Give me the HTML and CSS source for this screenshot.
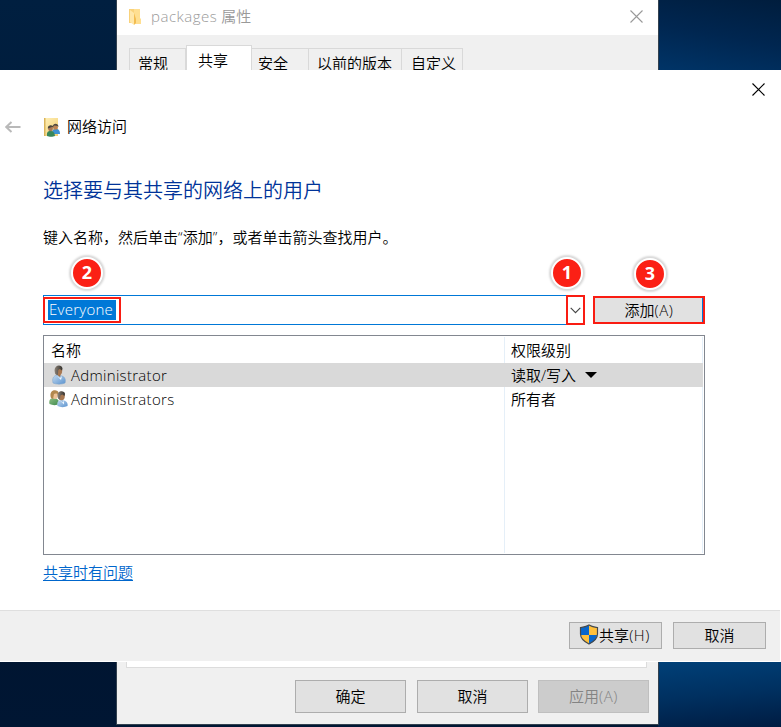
FILE: index.html
```
<!DOCTYPE html>
<html lang="zh-CN">
<head>
<meta charset="utf-8">
<title>网络访问</title>
<link rel="stylesheet" href="styles.css">
</head>
<body>
<svg class="defs" aria-hidden="true">
  <defs>
    <linearGradient id="shirt" x1="0" y1="0" x2="1" y2="1"><stop offset="0" stop-color="#c3daf0"/><stop offset="1" stop-color="#5b93cf"/></linearGradient>
    <linearGradient id="green" x1="0" y1="0" x2="1" y2="1"><stop offset="0" stop-color="#8fbd85"/><stop offset="1" stop-color="#3d8a4c"/></linearGradient>
    <linearGradient id="hair" x1="0" y1="0" x2="1" y2="0"><stop offset="0" stop-color="#8b8278"/><stop offset="1" stop-color="#34302b"/></linearGradient>
    <linearGradient id="folder" x1="0" y1="0" x2="1" y2="1"><stop offset="0" stop-color="#fff0b8"/><stop offset="1" stop-color="#f2ce70"/></linearGradient>
  </defs>
</svg>
<div class="desktop">
  <section class="window properties">
    <header class="titlebar">
      <svg class="folder" viewBox="0 0 12 17"><path d="M0 1h6v14H0z" fill="#f9d27b"/><path d="M5 1h6v9l1 1v5H5z" fill="#ffdf91"/><path d="M1 2l4 3v12l-4-3z" fill="#ffe7a9"/><path d="M5 5l2 6v4l-2 2z" fill="#f2bc51"/></svg>
      <span class="caption"><span class="latin">packages</span> 属性</span>
      <svg class="close" viewBox="0 0 13 13"><path d="M.5.5l12 12M12.5.5l-12 12"/></svg>
    </header>
    <nav class="tabs">
      <span class="tab t1">常规</span><span class="tab active">共享</span><span class="tab t3">安全</span><span class="tab t4">以前的版本</span><span class="tab t5">自定义</span>
    </nav>
    <div class="page"></div>
    <footer class="prop-actions">
      <button class="ok">确定</button><button>取消</button><button disabled>应用<span class="key">(A)</span></button>
    </footer>
  </section>

  <section class="window wizard">
    <div class="topbar"><svg class="close" viewBox="0 0 13 13"><path d="M.5.5l12 12M12.5.5l-12 12"/></svg></div>
    <header class="wizard-title">
      <svg class="back" viewBox="0 0 16 12"><path d="M15.5 6H1M6.5 1L1.2 6l5.300 5"/></svg>
      <svg class="share-icon" viewBox="0 0 17 19"><path d="M0 0h14v18H0z" fill="url(#folder)"/><path d="M0 0h1.500v18H0z" fill="#dab45a"/><path d="M8 16c0-4 1-5 4-5 3 0 4 2 4 5z" fill="#3f91d3"/><ellipse cx="11.500" cy="9" rx="2.300" ry="2.800" fill="#bd8354"/><path d="M8.800 9c0-4.500 5.700-4 5.700 0l-1-1-3-.5z" fill="#504b41"/><path d="M3 18c-.5-4 1-5 3.500-5s4 1 4.500 5c-2 1-6 1-8 0z" fill="#39875a"/><ellipse cx="6.500" cy="10.500" rx="2.300" ry="2.800" fill="#a77755"/><path d="M3.800 10.500C3.500 6.500 9.500 6.500 9.500 9.500l-2-.5-2 1z" fill="#4b463d"/></svg>
      <span class="title-text">网络访问</span>
    </header>
    <main class="content">
      <h1>选择要与其共享的网络上的用户</h1>
      <p>键入名称，然后单击<span class="quote">“</span>添加<span class="quote">”</span>，或者单击箭头查找用户。</p>
      <div class="entry">
        <div class="combo">
          <div class="name-box"><span class="selected">Everyone</span></div>
          <div class="arrow-box"><svg viewBox="0 0 11 7"><path d="M.7.8l4.800 4.800L10.300.8"/></svg></div>
        </div>
        <button class="add">添加<span class="key">(A)</span></button>
        <span class="badge b2">2</span><span class="badge b1">1</span><span class="badge b3">3</span>
      </div>
      <div class="list">
        <div class="row head"><span class="name">名称</span><span class="level">权限级别</span></div>
        <div class="row chosen">
          <span class="name user"><svg viewBox="0 0 20 20"><path d="M4 18c-1-4 0-7 4-8l5 1c3 1 4 4 3 7-3 1.500-9 1.500-12 0z" fill="url(#shirt)" stroke="#78a0c9" stroke-width=".5"/><path d="M7 9l4 3 1-4z" fill="#a66f3f"/><ellipse cx="10" cy="5.500" rx="3.200" ry="4.500" fill="#a87852"/><path d="M5.800 7C4-.5 13-1.500 13.500 3.500l-.5 2-2.200-1.500-1.500 1-.5 5c-2 0-3-1-3-3z" fill="url(#hair)"/><path d="M8 11l3 2 2-2-1 4z" fill="#eef7ff"/></svg>Administrator</span>
          <span class="level">读取/写入<i class="triangle"></i></span>
        </div>
        <div class="row">
          <span class="name user"><svg viewBox="0 0 20 20"><path d="M.5 15c-1-4 1-6 4-6s6 2 6 6c-3 1.500-7 1.500-10 0z" fill="url(#green)"/><ellipse cx="6" cy="6" rx="3" ry="4" fill="#edc398"/><path d="M2 9C0 3 4 .5 7 1.500c3 0 3 4 2 5C9 4 6 4 5 5l-1 5z" fill="#b2884e"/><path d="M8.500 17c-1-4 1-6 4-6s7 2 6 6c-3 1.500-7 1.500-10 0z" fill="url(#shirt)"/><ellipse cx="12.500" cy="7" rx="3.300" ry="4.300" fill="#a87852"/><path d="M8.700 8C7 1 16 1 16 5l-.6 2-2-1.500-2 1-.5 4c-1.400 0-2-1-2.200-2.500z" fill="url(#hair)"/><path d="M11 11.500l3 2 1-2v4z" fill="#eef7ff"/></svg>Administrators</span>
          <span class="level">所有者</span>
        </div>
        <div class="row blank"><span class="name"></span><span class="level"></span></div>
      </div>
      <a class="help">共享时有问题</a>
    </main>
    <footer class="wizard-actions">
      <button class="share"><svg class="shield" viewBox="0 0 20 21"><path d="M10 1c3 2 5 2 8 2.500V10c0 5-4 8-8 10-4-2-8-5-8-10V3.500C5 3 7 3 10 1z" fill="#ffc03b"/><path d="M10 1v10H2V3.500C5 3 7 3 10 1zM10 11h8c-.5 5-4 7.500-8 9z" fill="#0866cb"/><path d="M10 1c3 2 5 2 8.500 2.500V10c0 5-4.500 8-8.500 10-4-2-8.500-5-8.500-10V3.500C5 3 7 3 10 1z" fill="none" stroke="#45494c" stroke-width="1.200"/></svg>共享<span class="key">(H)</span></button>
      <button>取消</button>
    </footer>
  </section>
</div>
</body>
</html>
```
FILE: styles.css
```
* { box-sizing: border-box; }
body { margin: 0; color: #000; font: 350 15px/20px "Open Sans", "Noto Sans CJK SC", sans-serif; }
.defs { position: absolute; width: 0; height: 0; }
.desktop {
  position: relative; width: 781px; height: 727px; overflow: hidden;
  background:
    linear-gradient(175deg, #004078 0%, #003060 50%, #001c42 100%) 658px 662px / 123px 65px no-repeat,
    linear-gradient(10deg, #003467 0%, #002650 50%, #001d3d 100%) 658px 0 / 123px 70px no-repeat,
    linear-gradient(#001f40, #00142f 75%, #001633);
}
.window { position: absolute; display: flex; flex-direction: column; }
button {
  display: flex; align-items: center; justify-content: center; padding: 0 0 2px;
  border: 1px solid #adadad; border-radius: 0; background: #e1e1e1; color: #000; font: inherit;
}
button:disabled { color: #838383; background: #ccc; border-color: #bfbfbf; }
.key { letter-spacing: .6px; }
.close { width: 13px; height: 13px; fill: none; stroke: #000; stroke-width: 1.100; }

.properties { left: 116px; top: 0; width: 543px; height: 725px; border: solid #33414f; border-width: 0 1px 1px; background: #f0f0f0; }
.titlebar { display: flex; align-items: center; height: 35px; padding: 0 15px 3px 12px; background: #fff; color: #999; }
.folder { width: 12px; height: 17px; }
.caption { flex: 1; margin-left: 10px; }
.latin { letter-spacing: .5px; }
.titlebar .close { stroke: #999; }
.tabs { display: flex; align-items: flex-end; height: 38px; padding-left: 12px; }
.tab { height: 25px; padding: 4px 0 0 8px; border: solid #d9d9d9; border-width: 1px 1px 0 0; white-space: nowrap; }
.t1 { width: 57px; border-left-width: 1px; }
.active { width: 66px; height: 28px; padding-left: 11px; border-left-width: 1px; background: #fff; }
.t3 { width: 57px; padding-left: 6px; }
.t4 { width: 93px; padding-left: 8px; }
.t5 { width: 61px; padding-left: 9px; }
.page { flex: 1; margin: 0 11px 0 9px; border: 1px solid #dcdcdc; background: #fff; }
.prop-actions { display: flex; justify-content: flex-end; gap: 10px; padding: 12px 9px 11px; }
.prop-actions button { width: 111px; height: 33px; }
.prop-actions .ok { margin-right: 1px; }

.wizard { left: 0; top: 70px; width: 781px; height: 592px; background: #fff; }
.topbar { display: flex; justify-content: flex-end; height: 44px; padding: 13px 16px 0 0; }
.wizard-title { display: flex; align-items: center; height: 26px; padding-left: 5px; }
.title-text { padding-bottom: 2px; }
.back { width: 16px; height: 12px; fill: none; stroke: #b9b9b9; stroke-width: 2; }
.share-icon { width: 17px; height: 19px; margin: 0 6px 0 23px; }
.content { flex: 1; padding: 37px 76px 0 43px; }
h1 { margin: 0; color: #003399; font-size: 20px; font-weight: 350; line-height: 28px; }
p { margin: 22px 0 0; line-height: 20px; white-space: nowrap; }
.quote { font-family: "Open Sans", sans-serif; letter-spacing: .2px; }
.entry { position: relative; display: flex; justify-content: space-between; height: 30px; margin-top: 48px; }
.combo { display: flex; justify-content: space-between; width: 542px; border: 1px solid #0078d7; }
.name-box { width: 78px; height: 26px; margin: 1px 0 0 -1px; padding: 1px 0 0 3px; border: 2px solid #f91c12; }
.selected { display: block; width: 68px; height: 20px; padding: 0 1px; background: #0078d7; color: #fff; letter-spacing: .25px; line-height: 19px; }
.arrow-box { display: flex; align-items: center; justify-content: center; width: 19px; margin: -1px; padding-right: 1px; border: 2px solid #f91c12; }
.arrow-box svg { width: 11px; height: 7px; fill: none; stroke: #444; stroke-width: 1.100; }
.add { width: 112px; height: 28px; margin-top: 1px; padding-bottom: 0; border: 2px solid #f91c12; box-shadow: inset -1px 0 #0078d7; }
.badge {
  position: absolute; top: -38px; width: 32px; height: 32px; border: 2px solid #fff; border-radius: 50%;
  background: #fb2015; box-shadow: 0 0 2px 2px #d9d9d9; color: #fff; font: bold 18px/26px "Open Sans", sans-serif; text-align: center;
}
.b2 { left: 28px; }
.b1 { left: 508px; }
.b3 { left: 591px; top: -37px; }
.list { display: flex; flex-direction: column; height: 220px; margin-top: 10px; padding: 1px 1px 1px 0; border: 1px solid #828790; }
.row { display: flex; height: 24px; line-height: 24px; }
.row.head { height: 26px; line-height: 26px; }
.row.blank { flex: 1; }
.name { width: 461px; padding-left: 7px; border-right: 1px solid #e5eff8; }
.user { display: flex; padding-left: 5px; letter-spacing: .3px; }
.user svg { width: 20px; height: 20px; margin: 2px 2px 0 0; }
.level { flex: 1; padding-left: 6px; border-right: 1px solid #e5f0fa; }
.chosen { background: #d9d9d9; }
.chosen .name, .chosen .level { border-color: #d9d9d9; }
.triangle { display: inline-block; margin: 0 0 3px 9px; border: solid transparent; border-width: 6px 6px 0; border-top-color: #000; }
.help { display: inline-block; margin-top: 7px; color: #0066cc; text-decoration: underline; text-underline-offset: 2px; }
.wizard-actions { display: flex; justify-content: flex-end; gap: 11px; width: 780px; height: 52px; padding: 11px 14px 0; border-top: 1px solid #dfdfdf; border-bottom: 1px solid #fff; background: #f0f0f0; }
.wizard-actions button { width: 93px; height: 27px; }
.share { padding-right: 2px; }
.shield { width: 20px; height: 21px; }
```
